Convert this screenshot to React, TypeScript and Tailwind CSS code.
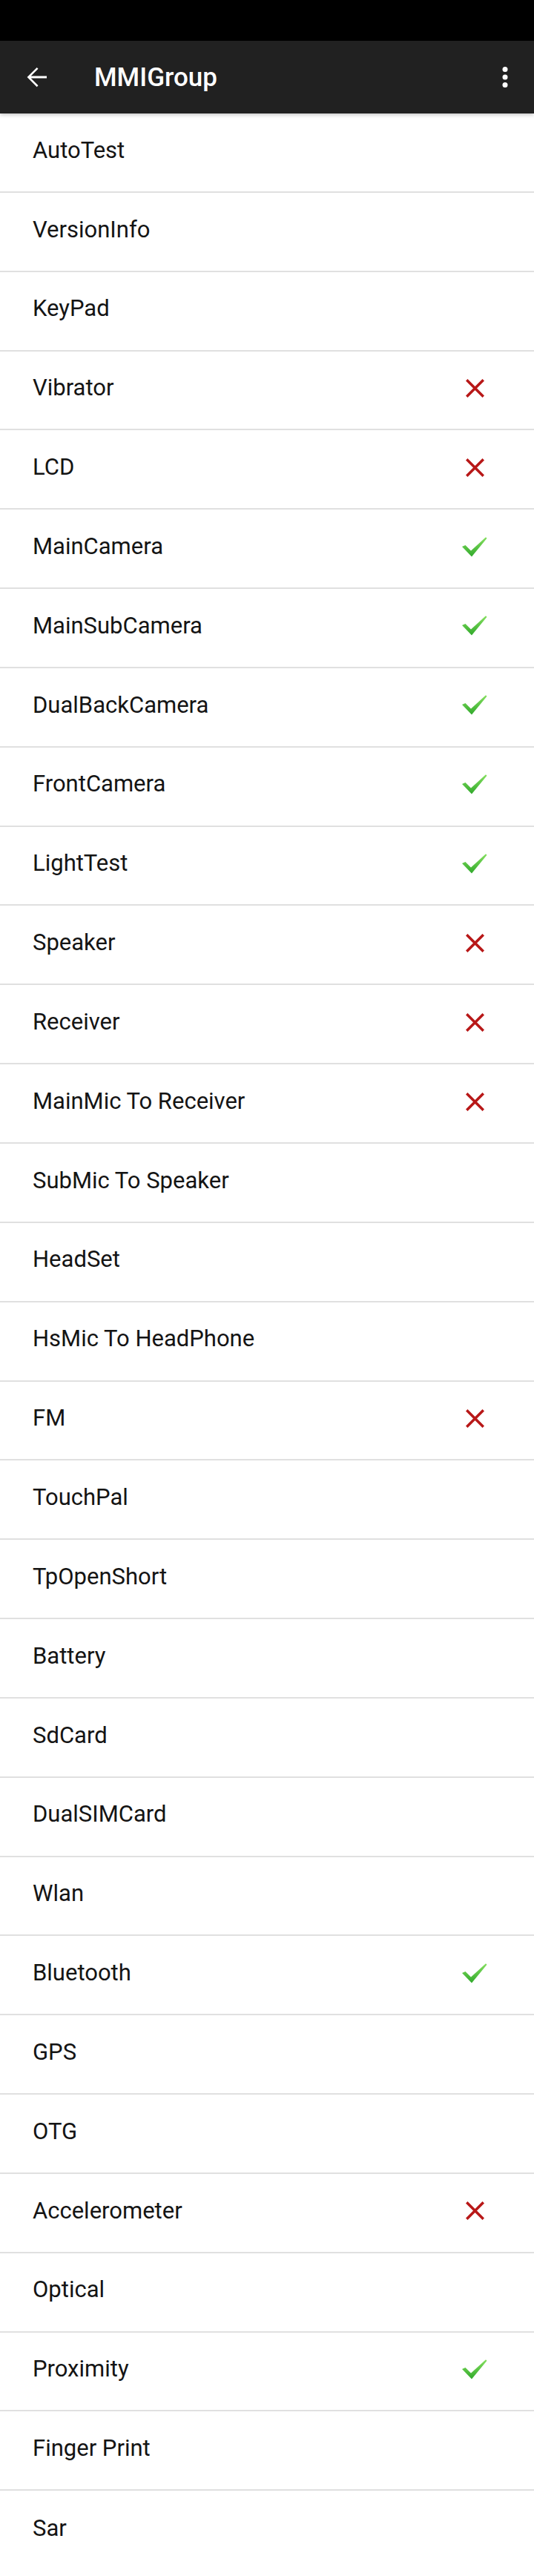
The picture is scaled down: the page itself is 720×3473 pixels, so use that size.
import React from "react";

type Status = "ok" | "fail" | null;

const items: [string, Status][] = [
  ["AutoTest", null],
  ["VersionInfo", null],
  ["KeyPad", null],
  ["Vibrator", "fail"],
  ["LCD", "fail"],
  ["MainCamera", "ok"],
  ["MainSubCamera", "ok"],
  ["DualBackCamera", "ok"],
  ["FrontCamera", "ok"],
  ["LightTest", "ok"],
  ["Speaker", "fail"],
  ["Receiver", "fail"],
  ["MainMic To Receiver", "fail"],
  ["SubMic To Speaker", null],
  ["HeadSet", null],
  ["HsMic To HeadPhone", null],
  ["FM", "fail"],
  ["TouchPal", null],
  ["TpOpenShort", null],
  ["Battery", null],
  ["SdCard", null],
  ["DualSIMCard", null],
  ["Wlan", null],
  ["Bluetooth", "ok"],
  ["GPS", null],
  ["OTG", null],
  ["Accelerometer", "fail"],
  ["Optical", null],
  ["Proximity", "ok"],
  ["Finger Print", null],
  ["Sar", null],
];

function Cross() {
  return (
    <svg width="25" height="25" viewBox="0 0 25 25">
      <path d="M2.5 2.5 L22.5 22.5 M22.5 2.5 L2.5 22.5" stroke="#b81818" strokeWidth="3.6" strokeLinecap="square" fill="none" />
    </svg>
  );
}

function Check() {
  return (
    <svg width="34" height="27" viewBox="0 0 34 27">
      <defs>
        <linearGradient id="cg" x1="0" y1="0" x2="0" y2="1">
          <stop offset="0" stopColor="#86e060" />
          <stop offset="1" stopColor="#2fa82a" />
        </linearGradient>
      </defs>
      <path d="M0 13 L4.5 11 L12 18.5 L32 0.3 L33.5 1.8 L13 26.5 Z" fill="url(#cg)" />
    </svg>
  );
}

export default function App() {
  return (
    <div className="min-h-screen bg-white" style={{ fontFamily: "Roboto, 'Noto Sans', sans-serif" }}>
      <div className="h-[55px] bg-black" />
      <div className="relative z-10 flex h-[98px] items-center bg-[#212121] shadow-[0_2px_5px_rgba(0,0,0,0.22)]">
        <div className="ml-[28px] flex h-[42px] w-[42px] items-center justify-center">
          <svg width="42" height="42" viewBox="0 0 24 24">
            <path d="M20 11.1H7.83l5.59-5.59L12.4 4.5l-7.5 7.5 7.5 7.5 1.02-1.02L7.83 12.9H20v-1.8z" fill="#ffffff" />
          </svg>
        </div>
        <div className="ml-[57px] text-[35px] font-medium leading-none text-white">MMIGroup</div>
        <div className="ml-auto mr-[18px] flex h-[42px] w-[42px] items-center justify-center">
          <svg width="42" height="42" viewBox="0 0 24 24">
            <circle cx="12" cy="6" r="2" fill="#ffffff" />
            <circle cx="12" cy="12" r="2" fill="#ffffff" />
            <circle cx="12" cy="18" r="2" fill="#ffffff" />
          </svg>
        </div>
      </div>
      <div className="flex flex-col">
        {items.map(([label, status]) => (
          <div
            key={label}
            className="flex h-[106.85px] items-center border-b-2 border-[#e0e0e0] pb-[5px] pl-[44px] pr-[60px] last:border-b-0"
          >
            <span className="text-[31px] text-[#141414]">{label}</span>
            <div className="ml-auto flex w-[40px] items-center justify-center">
              {status === "fail" && <Cross />}
              {status === "ok" && <Check />}
            </div>
          </div>
        ))}
      </div>
    </div>
  );
}
